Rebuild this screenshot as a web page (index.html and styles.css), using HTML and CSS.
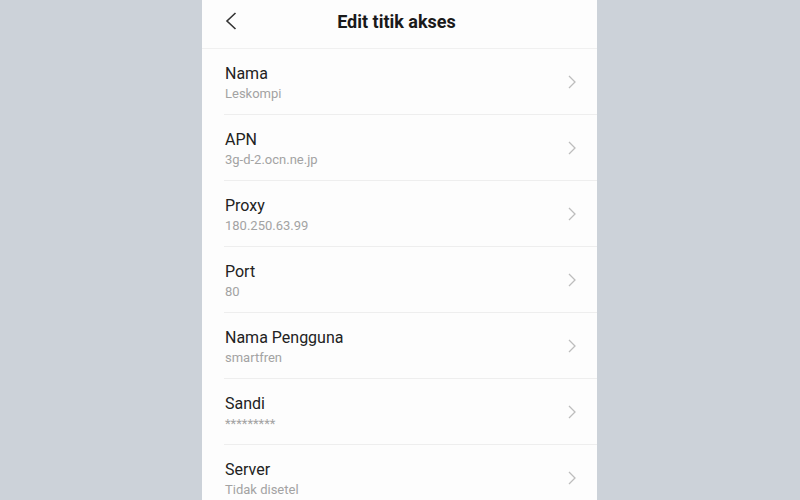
FILE: index.html
```html
<!DOCTYPE html>
<html lang="id">

<head>
    <meta charset="UTF-8">
    <meta name="viewport" content="width=device-width, initial-scale=1.0">
    <title>Edit titik akses</title>
    <link rel="stylesheet" href="styles.css">
</head>

<body>
    <div class="screen">
        <div class="header">
            <svg class="back" width="12" height="18" viewBox="0 0 12 18">
                <path d="M10.5 1 L2 9 L10.5 17" fill="none" stroke="#333" stroke-width="1.6" />
            </svg>
            <h1>Edit titik akses</h1>
        </div>
        <ul class="list">
            <li class="item">
                <div class="text">
                    <div class="title">Nama</div>
                    <div class="sub">Leskompi</div>
                </div>
                <svg class="arrow" width="8" height="14" viewBox="0 0 8 14">
                    <path d="M1 1 L7 7 L1 13" fill="none" stroke="#bdbdbd" stroke-width="1.3" />
                </svg>
            </li>
            <li class="item">
                <div class="text">
                    <div class="title">APN</div>
                    <div class="sub">3g-d-2.ocn.ne.jp</div>
                </div>
                <svg class="arrow" width="8" height="14" viewBox="0 0 8 14">
                    <path d="M1 1 L7 7 L1 13" fill="none" stroke="#bdbdbd" stroke-width="1.3" />
                </svg>
            </li>
            <li class="item">
                <div class="text">
                    <div class="title">Proxy</div>
                    <div class="sub">180.250.63.99</div>
                </div>
                <svg class="arrow" width="8" height="14" viewBox="0 0 8 14">
                    <path d="M1 1 L7 7 L1 13" fill="none" stroke="#bdbdbd" stroke-width="1.3" />
                </svg>
            </li>
            <li class="item">
                <div class="text">
                    <div class="title">Port</div>
                    <div class="sub">80</div>
                </div>
                <svg class="arrow" width="8" height="14" viewBox="0 0 8 14">
                    <path d="M1 1 L7 7 L1 13" fill="none" stroke="#bdbdbd" stroke-width="1.3" />
                </svg>
            </li>
            <li class="item">
                <div class="text">
                    <div class="title">Nama Pengguna</div>
                    <div class="sub">smartfren</div>
                </div>
                <svg class="arrow" width="8" height="14" viewBox="0 0 8 14">
                    <path d="M1 1 L7 7 L1 13" fill="none" stroke="#bdbdbd" stroke-width="1.3" />
                </svg>
            </li>
            <li class="item">
                <div class="text">
                    <div class="title">Sandi</div>
                    <div class="sub">*********</div>
                </div>
                <svg class="arrow" width="8" height="14" viewBox="0 0 8 14">
                    <path d="M1 1 L7 7 L1 13" fill="none" stroke="#bdbdbd" stroke-width="1.3" />
                </svg>
            </li>
            <li class="item">
                <div class="text">
                    <div class="title">Server</div>
                    <div class="sub">Tidak disetel</div>
                </div>
                <svg class="arrow" width="8" height="14" viewBox="0 0 8 14">
                    <path d="M1 1 L7 7 L1 13" fill="none" stroke="#bdbdbd" stroke-width="1.3" />
                </svg>
            </li>
        </ul>
    </div>
</body>

</html>
```

FILE: styles.css
```css
html,
body {
    margin: 0;
    height: 100%;
    overflow: hidden;
}

body {
    background-color: #ccd2d9;
    font-family: Roboto, "Noto Sans", sans-serif;
    display: flex;
    justify-content: center;
}

.screen {
    margin-left: -1px;
    width: 395px;
    height: 100%;
    background-color: #fdfdfd;
}

.header {
    height: 42px;
    padding: 0 6px 6px 0;
    border-bottom: 1px solid #f0f0f0;
    display: flex;
    align-items: center;
    justify-content: center;
    position: relative;

    .back {
        position: absolute;
        left: 23px;
        top: 12px;
    }

    & h1 {
        margin: 0;
        font-size: 18px;
        font-weight: 700;
        color: #1a1a1a;
    }
}

.list {
    list-style: none;
    margin: 0;
    padding: 0 0 0 22px;
}

.item {
    display: flex;
    align-items: center;
    padding: 15px 21px 12px 1px;
    border-bottom: 1px solid #eeeeee;

    .text {
        flex: 1;
    }

    .title {
        font-size: 16px;
        line-height: 20px;
        color: #222;
    }

    .sub {
        margin-top: 2px;
        font-size: 13px;
        line-height: 16px;
        color: #a3a3a3;
    }

    .arrow {
        margin-top: -2px;
    }
}
```
